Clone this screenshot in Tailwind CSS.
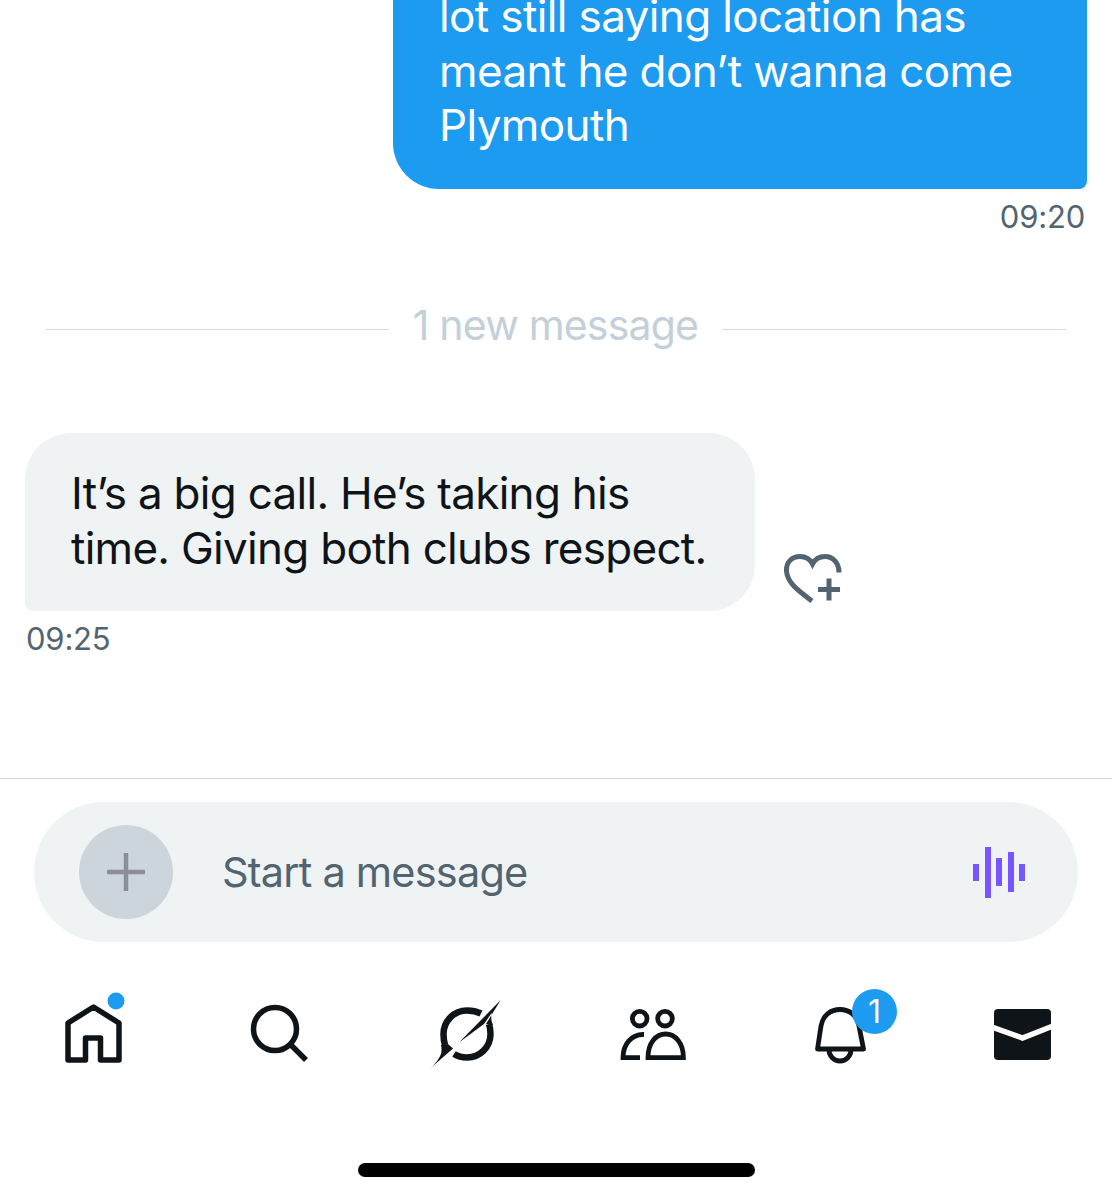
<!doctype html>
<html>
<head>
<meta charset="utf-8">
<script src="https://cdn.jsdelivr.net/npm/@tailwindcss/browser@4"></script>
</head>
<body class="bg-white">
<div class="w-[1112px] h-[1200px] overflow-hidden flex flex-col font-['Inter',sans-serif] text-[#0f1419]">
  <div class="ml-[393px] mt-[-47px] w-[694px] h-[236px] pt-[36px] px-[46px] bg-[#1d9bf0] text-white rounded-bl-[46px] rounded-br-[8px] text-[44px] leading-[54.5px] tracking-[-0.62px]">
    <p>lot still saying location has</p>
    <p>meant he don’t wanna come</p>
    <p>Plymouth</p>
  </div>
  <p class="mt-[8px] pr-[27px] text-right text-[#536471] text-[31px] leading-[40px] tracking-[-0.2px]">09:20</p>
  <div class="mt-[67px] px-[46px] h-[50px] flex items-center">
    <div class="w-[343px] h-[1px] bg-[#d5dde2]"></div>
    <p class="w-[334px] text-center text-[#c3d0d9] text-[41px] leading-[50px] tracking-[-0.8px] mt-[-8px]">1 new message</p>
    <div class="w-[344px] h-[1px] bg-[#d5dde2]"></div>
  </div>
  <div class="mt-[79px] ml-[25px] flex items-end">
    <div class="w-[730px] h-[178px] pl-[46px] pt-[33px] bg-[#eff3f4] rounded-[46px] rounded-bl-[8px] text-[44px] leading-[55px] tracking-[-0.72px]">
      <p>It’s a big call. He’s taking his</p>
      <p>time. Giving both clubs respect.</p>
    </div>
    <svg class="ml-[26px] mb-[3px] w-[64px] h-[56px]" viewBox="781 551 64 56" fill="none" stroke="#536471">
      <path stroke-width="5" d="M812 600C800 591 787 582 786.5 570C786 561 792 555.5 800 555.5C805 555.5 810 558 812.5 563C815 558 820 555.5 825 555.5C833 555.5 839 562 839 571.5"/>
      <path stroke-width="5" d="M829 577.5V599.5M818 588.5H840"/>
    </svg>
  </div>
  <p class="mt-[8px] ml-[26px] text-[#536471] text-[31px] leading-[40px] tracking-[-0.2px]">09:25</p>
  <div class="mt-[119px] border-t border-[#cfd9de]"></div>
  <div class="mt-[23px] mx-[34px] h-[140px] rounded-full bg-[#eff3f4] flex items-center pl-[45px] pr-[53px]">
    <div class="w-[94px] h-[94px] rounded-full bg-[#cdd5dc] flex items-center justify-center">
      <svg class="w-[40px] h-[40px]" viewBox="0 0 40 40" stroke="#8a8e99" stroke-width="4.5"><path d="M20 1V39M1 20H39"/></svg>
    </div>
    <p class="ml-[49px] text-[#536471] text-[41.5px] tracking-[-0.8px]">Start a message</p>
    <div class="ml-auto flex items-center gap-[5.5px]">
      <span class="w-[6px] h-[17px] bg-[#7856ff]"></span>
      <span class="w-[6px] h-[51px] bg-[#7856ff]"></span>
      <span class="w-[6px] h-[28px] bg-[#7856ff]"></span>
      <span class="w-[6px] h-[40px] bg-[#7856ff]"></span>
      <span class="w-[6px] h-[17px] bg-[#7856ff]"></span>
    </div>
  </div>
  <nav class="mt-[44px] h-[90px] pl-[61px] flex gap-[122px] relative">
    <svg class="w-[64px] h-[90px] shrink-0 overflow-visible" viewBox="61 985 64 90" fill="none" stroke="#0f1419" stroke-width="5.5" stroke-linejoin="round">
      <path d="M93.5 1006L119 1022V1059H100.5V1037H85.5V1059H68V1022Z"/>
      <circle cx="116" cy="1000" r="8.5" fill="#1d9bf0" stroke="none"/>
    </svg>
    <svg class="w-[64px] h-[90px] shrink-0" viewBox="247 985 64 90" fill="none" stroke="#0f1419" stroke-width="5.5">
      <circle cx="275" cy="1028" r="21.5"/>
      <path d="M291 1044L306 1059"/>
    </svg>
    <svg class="w-[74px] h-[90px] shrink-0 ml-[-4px]" viewBox="429 985 74 90" fill="none" stroke="#0f1419" stroke-width="6.5">
      <path d="M481 1012.5C476 1010 471 1009.500 467 1009.500C454 1009.500 443.500 1020 443.500 1033C443.500 1037 444 1041 445 1044"/>
      <path d="M454 1053C458 1055.500 462 1056.500 467 1056.500C480 1056.500 490.500 1046 490.500 1033C490.500 1029 490 1026 489 1023"/>
      <path fill="#0f1419" stroke="none" d="M500.700 999L459 1041.500L484 1023ZM500.700 999C492 1008 489 1015 493 1024L486 1023ZM430.700 1067C440 1058 443 1052 441 1044L448 1043L453 1047.500Z"/>
    </svg>
    <svg class="w-[72px] h-[90px] shrink-0 ml-[-8px]" viewBox="618 985 72 90" fill="none" stroke="#0f1419" stroke-width="4.800">
      <circle cx="640.700" cy="1017.700" r="7.300"/>
      <circle cx="666" cy="1017.700" r="7.300"/>
      <path d="M649 1056.700H684.400C684.400 1042 676 1033 666.700 1033C657 1033 649 1042 649 1056.700Z"/>
      <path d="M645 1033.500C632 1033 624 1044 624 1056.700H641"/>
    </svg>
    <svg class="w-[60px] h-[90px] shrink-0 ml-[-1px]" viewBox="810 985 60 90" fill="none" stroke="#0f1419" stroke-width="4.800" stroke-linejoin="round">
      <path d="M817.500 1048L821 1025C823 1014 831 1008.500 840 1008.500C849 1008.500 857 1014 859 1025L863.500 1048Z"/>
      <path d="M829 1049C829 1055 834 1060 840 1060C846 1060 851 1055 851 1049"/>
    </svg>
    <svg class="w-[60px] h-[90px] shrink-0" viewBox="992 985 60 90">
      <rect x="994" y="1008" width="57" height="51" rx="4" fill="#0f1419"/>
      <path d="M992 1026L1022.500 1037L1053 1025" fill="none" stroke="#fff" stroke-width="5.500"/>
    </svg>
    <span class="absolute left-[852px] top-[3px] w-[45px] h-[45px] rounded-full bg-[#1d9bf0] text-white text-[32px] leading-[45px] text-center">1</span>
  </nav>
  <div class="mt-[87px] mx-auto w-[397px] h-[14px] rounded-full bg-black shrink-0"></div>
</div>
</body>
</html>
